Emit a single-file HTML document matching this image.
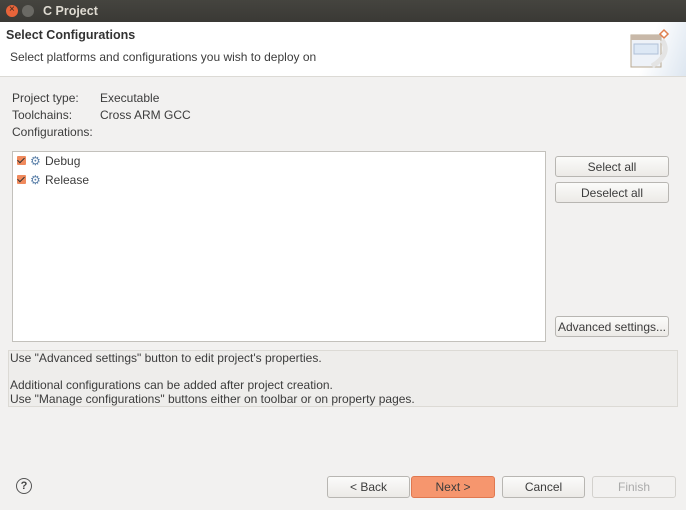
<!DOCTYPE html><html><head><style>
body{margin:0;width:686px;height:510px;background:#f2f1f0;font-family:"Liberation Sans","DejaVu Sans",sans-serif;font-size:12px;color:#3c3c3c;position:relative;overflow:hidden}
.a{position:absolute;white-space:nowrap}
.btn{position:absolute;border:1px solid #b8b6b2;border-radius:3px;background:linear-gradient(#fbfbfa,#eceae7);text-align:center;line-height:20px;font-size:12px;color:#3c3c3c;box-sizing:border-box}
.cb{position:absolute;width:9px;height:9px;background:#f08a5d;border-radius:1px}
.cb:after{content:"";position:absolute;left:2px;top:0px;width:3px;height:6px;border:solid #333;border-width:0 1.5px 1.5px 0;transform:rotate(45deg)}
</style></head><body>
<div class="a" style="left:0;top:0;width:686px;height:22px;background:linear-gradient(#45443f,#3a3935)"></div>
<div class="a" style="left:6px;top:5px;width:12px;height:12px;border-radius:50%;background:#e8643a"></div>
<div class="a" style="left:9px;top:2px;color:#3a2a20;font-size:10px;line-height:16px">×</div>
<div class="a" style="left:22px;top:5px;width:12px;height:12px;border-radius:50%;background:#6a6964"></div>
<div class="a" style="left:43px;top:4px;color:#dfdbd2;font-weight:bold;font-size:12.5px">C Project</div>
<div class="a" style="left:0;top:22px;width:686px;height:54px;background:#fff;border-bottom:1px solid #dcdad5"></div>
<div class="a" style="left:626px;top:22px;width:60px;height:54px;background:linear-gradient(110deg,#fff 40%,#dde6f0)"></div>
<div class="a" style="left:6px;top:28px;font-weight:bold;font-size:12.5px;color:#333">Select Configurations</div>
<div class="a" style="left:10px;top:50px">Select platforms and configurations you wish to deploy on</div>
<svg class="a" style="left:628px;top:26px" width="48" height="46"><rect x="3" y="9" width="30" height="32" fill="#eef2f8" stroke="#b8a890"/><rect x="3" y="9" width="30" height="5" fill="#c8b8a8"/><rect x="6" y="18" width="24" height="10" fill="#dde8f5" stroke="#b0c0d8"/><path d="M36 4l4 4-4 4-4-4z" fill="#fff" stroke="#e08050" stroke-width="1.5"/><path d="M34 14c6 8 4 18-10 26" fill="none" stroke="#e4e4e4" stroke-width="5"/></svg>
<div class="a" style="left:12px;top:91px">Project type:</div><div class="a" style="left:100px;top:91px">Executable</div>
<div class="a" style="left:12px;top:108px">Toolchains:</div><div class="a" style="left:100px;top:108px">Cross ARM GCC</div>
<div class="a" style="left:12px;top:125px">Configurations:</div>
<div class="a" style="left:12px;top:151px;width:532px;height:189px;background:#fff;border:1px solid #c3c1bc"></div>
<div class="cb" style="left:17px;top:156px"></div><div class="a" style="left:30px;top:154px;color:#5a7fa8">⚙</div><div class="a" style="left:45px;top:154px">Debug</div>
<div class="cb" style="left:17px;top:175px"></div><div class="a" style="left:30px;top:173px;color:#5a7fa8">⚙</div><div class="a" style="left:45px;top:173px">Release</div>
<div class="btn" style="left:555px;top:156px;width:114px;height:21px">Select all</div>
<div class="btn" style="left:555px;top:182px;width:114px;height:21px">Deselect all</div>
<div class="btn" style="left:555px;top:316px;width:114px;height:21px">Advanced settings...</div>
<div class="a" style="left:8px;top:350px;width:668px;height:55px;background:#eeedeb;border:1px solid #dcdad5"></div>
<div class="a" style="left:10px;top:351px">Use "Advanced settings" button to edit project's properties.</div>
<div class="a" style="left:10px;top:378px">Additional configurations can be added after project creation.</div>
<div class="a" style="left:10px;top:392px">Use "Manage configurations" buttons either on toolbar or on property pages.</div>
<div class="a" style="left:16px;top:478px;width:14px;height:14px;border:1.3px solid #555;border-radius:50%;text-align:center;line-height:14px;font-size:11px;font-weight:bold;color:#444">?</div>
<div class="btn" style="left:327px;top:476px;width:83px;height:22px">&lt; Back</div>
<div class="btn" style="left:411px;top:476px;width:84px;height:22px;background:#f6966e;border-color:#e07850">Next &gt;</div>
<div class="btn" style="left:502px;top:476px;width:83px;height:22px">Cancel</div>
<div class="btn" style="left:592px;top:476px;width:84px;height:22px;color:#aaa;border-color:#d3d1cd;background:#f2f1f0">Finish</div>
</body></html>
